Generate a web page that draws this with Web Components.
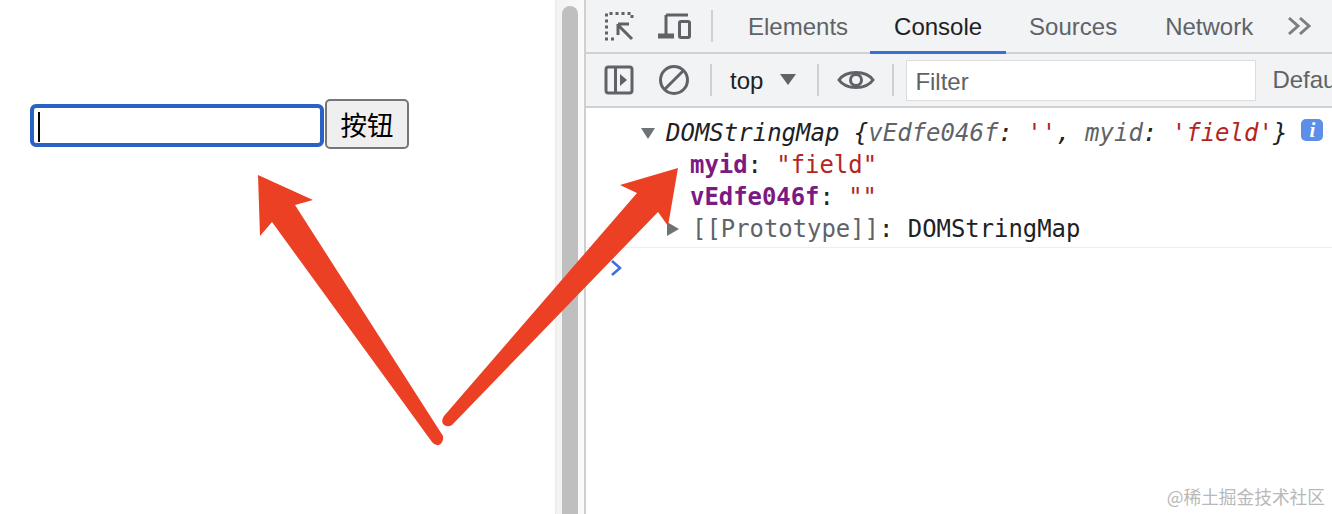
<!DOCTYPE html>
<html lang="zh">
<head>
<meta charset="utf-8">
<title>DOMStringMap</title>
<style>
    html, body{ margin: 0; height: 100%; background: #fff; overflow: hidden; }
    body{ font-family: "Liberation Sans", "Noto Sans CJK SC", sans-serif; }
</style>
</head>
<body>
<screen-shot>
    <demo-page></demo-page>
    <page-scrollbar></page-scrollbar>
    <dev-tools></dev-tools>
</screen-shot>

<script>
// outer frame, arrows and watermark lie over both panes
const shotTemplate = document.createElement('template');
shotTemplate.innerHTML = `
<style>
    :host{ display: flex; position: relative; width: 1332px; height: 514px; overflow: hidden; }
    svg{ position: absolute; left: 0; top: 0; pointer-events: none; }
    .mark{
        position: absolute;
        right: 7px;
        bottom: 6px;
        font: 17.7px/24px "Noto Sans CJK SC", sans-serif;
        color: #b8b8b8;
    }
</style>
<slot></slot>
<svg width="1332" height="514" viewBox="0 0 1332 514">
    <path fill="#ec4024" d="M258 175 L313 200 L295 205 L443 436 Q444 442 439 445 Q435 446 432 442 L272 222 L260 236 Z"/>
    <path fill="#ec4024" d="M678 168 L668 226 L658 212 L452 425 Q447 428 443 424 Q441 420 444 416 L637 193 L620 185 Z"/>
</svg>
<div class="mark">@稀土掘金技术社区</div>
`;
class ScreenShot extends HTMLElement{
    constructor(){
        super();
        this.attachShadow({mode: 'open'});
        this.shadowRoot.appendChild(shotTemplate.content.cloneNode(true));
    }
}
customElements.define('screen-shot', ScreenShot);

const demoTemplate = document.createElement('template');
demoTemplate.innerHTML = `
<style>
    :host{
        display: flex;
        flex: none;
        width: 524px;
        height: 100%;
        box-sizing: border-box;
        padding: 99px 0 0 30px;
        align-items: flex-start;
        gap: 1px;
        background: #fff;
    }
    .field{
        width: 294px;
        height: 43px;
        margin-top: 5px;
        box-sizing: border-box;
        border: 4px solid #2a62c4;
        border-radius: 6px;
        padding: 4px 0 0 4px;
        background: #fff;
    }
    .caret{ width: 2px; height: 30px; background: #000; }
    button{
        width: 84px;
        height: 50px;
        box-sizing: border-box;
        padding: 0;
        border: 2px solid #767676;
        border-radius: 5px;
        background: #efefef;
        color: #000;
        font: 26.5px/1 "Noto Sans CJK SC", sans-serif;
    }
</style>
<div class="field"><div class="caret"></div></div>
<button>按钮</button>
`;
class DemoPage extends HTMLElement{
    constructor(){
        super();
        this.attachShadow({mode: 'open'});
        this.shadowRoot.appendChild(demoTemplate.content.cloneNode(true));
    }
}
customElements.define('demo-page', DemoPage);

const barTemplate = document.createElement('template');
barTemplate.innerHTML = `
<style>
    :host{
        display: block;
        flex: none;
        width: 62px;
        height: 100%;
        box-sizing: border-box;
        padding: 6px 8px 0 38px;
        background: linear-gradient(90deg, #fff 31px, #e9e9e9 31px, #f3f3f3 33px, #f3f3f3 38px, #f9f9f9 54px, #fafafa 60px, #cfcfcf 60px);
    }
    .thumb{ height: 100%; border-radius: 8px 8px 0 0; background: #bfbfbf; }
</style>
<div class="thumb"></div>
`;
class PageScrollbar extends HTMLElement{
    constructor(){
        super();
        this.attachShadow({mode: 'open'});
        this.shadowRoot.appendChild(barTemplate.content.cloneNode(true));
    }
}
customElements.define('page-scrollbar', PageScrollbar);

const toolsTemplate = document.createElement('template');
toolsTemplate.innerHTML = `
<style>
    :host{
        display: flex;
        flex-direction: column;
        flex: 1;
        min-width: 0;
        height: 100%;
        font-family: "Liberation Sans", sans-serif;
        font-size: 24px;
        color: #5f6368;
    }
    .bar{
        display: flex;
        align-items: center;
        flex: none;
        height: 54px;
        box-sizing: border-box;
        border-bottom: 2px solid #d0d1d3;
        background: #f1f3f4;
        white-space: nowrap;
    }
    .tabs{ padding-left: 18px; }
    .tools{ padding-left: 18px; overflow: hidden; }
    svg{ display: block; flex: none; fill: none; stroke: #5f6368; stroke-width: 3; }
    .sep{ flex: none; width: 2px; height: 32px; background: #cfd0d2; }
    .context{ color: #202124; margin: 2px 0 0 18px; }
    .filter{
        flex: none;
        width: 350px;
        height: 41px;
        margin: 0 16px 0 12px;
        padding-left: 8px;
        box-sizing: border-box;
        border: 1px solid #dcdddf;
        background: #fff;
        line-height: 41px;
    }
</style>
<div class="bar tabs">
    <svg width="30" height="30" viewBox="0 0 30 30">
        <path stroke-dasharray="3 3" d="M10 28 H2.5 V2.5 H28 V10"/>
        <path d="M14 14 L28 28 M14 13 H25 M14 13 V24"/>
    </svg>
    <svg width="34" height="26" viewBox="0 0 34 26" style="margin-left:24px">
        <path d="M8 2 H30 M8 2 V23"/>
        <path d="M0 23 H16" stroke-width="5"/>
        <rect x="21.5" y="8.5" width="10" height="16" rx="1.5"/>
    </svg>
    <div class="sep" style="margin-left:19px"></div>
    <dev-tab style="margin-left:11px">Elements</dev-tab>
    <dev-tab active style="margin-left:-2px">Console</dev-tab>
    <dev-tab style="margin-left:-1px">Sources</dev-tab>
    <dev-tab>Network</dev-tab>
    <svg width="26" height="20" viewBox="0 0 26 20" style="margin-left:10px;stroke:#7b7e83">
        <path d="M2 2 L11 10 L2 18 M13 2 L22 10 L13 18"/>
    </svg>
</div>
<div class="bar tools">
    <svg width="30" height="30" viewBox="0 0 30 30">
        <rect x="2" y="2" width="26" height="26" rx="2.5"/>
        <path d="M11.5 2 V28"/>
        <path d="M16 9 L23 15 L16 21 Z" fill="#5f6368" stroke="none"/>
    </svg>
    <svg width="32" height="32" viewBox="0 0 32 32" style="margin-left:24px">
        <circle cx="16" cy="16" r="13.5"/>
        <path d="M6.5 25.5 L25.5 6.5"/>
    </svg>
    <div class="sep" style="margin-left:20px"></div>
    <div class="context">top</div>
    <svg width="16" height="12" viewBox="0 0 16 12" style="margin-left:17px;margin-top:-1px">
        <path d="M0 0 H16 L8 11 Z" fill="#5f6368" stroke="none"/>
    </svg>
    <div class="sep" style="margin-left:21px"></div>
    <svg width="38" height="26" viewBox="0 0 38 26" style="margin-left:18px">
        <path d="M2 13 C9 3 29 3 36 13 C29 23 9 23 2 13 Z"/>
        <circle cx="19" cy="13" r="5.5"/>
    </svg>
    <div class="sep" style="margin-left:17px"></div>
    <div class="filter">Filter</div>
    <div>Default levels</div>
</div>
<dev-console></dev-console>
`;
class DevTools extends HTMLElement{
    constructor(){
        super();
        this.attachShadow({mode: 'open'});
        this.shadowRoot.appendChild(toolsTemplate.content.cloneNode(true));
    }
}
customElements.define('dev-tools', DevTools);

const tabTemplate = document.createElement('template');
tabTemplate.innerHTML = `
<style>
    :host{
        display: block;
        flex: none;
        align-self: flex-start;
        height: 52px;
        box-sizing: border-box;
        padding: 0 24px;
        line-height: 54px;
        color: #5f6368;
    }
    :host([active]){ color: #202124; border-bottom: 3px solid #3b6fd6; height: 54px; }
</style>
<slot></slot>
`;
class DevTab extends HTMLElement{
    constructor(){
        super();
        this.attachShadow({mode: 'open'});
        this.shadowRoot.appendChild(tabTemplate.content.cloneNode(true));
    }
}
customElements.define('dev-tab', DevTab);

const consoleTemplate = document.createElement('template');
consoleTemplate.innerHTML = `
<style>
    :host{
        display: block;
        flex: 1;
        background: #fff;
        padding-top: 9px;
        font: 23.9px/32px "DejaVu Sans Mono", monospace;
        color: #202124;
        white-space: nowrap;
        overflow: hidden;
    }
    .row{ display: flex; align-items: center; height: 32px; }
    .head{ padding-left: 55px; font-style: italic; font-size: 24px; }
    .prop{ padding-left: 104px; }
    .proto{ padding-left: 81px; }
    .key{ color: #7b1a82; font-weight: bold; }
    .str{ color: #b3261e; }
    .dim{ color: #5f6368; }
    svg{ flex: none; }
    .info{
        flex: none;
        width: 22px;
        height: 22px;
        margin: -6px 0 0 14px;
        border-radius: 5px;
        background: #5e8fe8;
        color: #fff;
        font: italic bold 21px/22px "Liberation Serif", serif;
        text-align: center;
    }
    .line{ height: 1px; margin-top: 2px; background: #eeeeee; }
    .prompt{ display: block; margin: 12px 0 0 24px; fill: none; stroke: #3b6fe0; stroke-width: 2.5; }
</style>
<div class="row head">
    <svg width="14" height="11" viewBox="0 0 14 11" style="margin-right:11px"><path d="M0 0 H14 L7 11 Z" fill="#6e7175"/></svg>
    <span>DOMStringMap {<span class="dim">vEdfe046f</span>: <span class="str">''</span>, <span class="dim">myid</span>: <span class="str">'field'</span>}</span>
    <span class="info">i</span>
</div>
<div class="row prop"><span><span class="key">myid</span>: <span class="str">"field"</span></span></div>
<div class="row prop"><span><span class="key">vEdfe046f</span>: <span class="str">""</span></span></div>
<div class="row proto">
    <svg width="12" height="14" viewBox="0 0 12 14" style="margin-right:13px"><path d="M0 0 L12 7 L0 14 Z" fill="#6e7175"/></svg>
    <span><span class="dim">[[Prototype]]</span>: DOMStringMap</span>
</div>
<div class="line"></div>
<svg class="prompt" width="12" height="16" viewBox="0 0 12 16"><path d="M2 1 L10 8 L2 15"/></svg>
`;
class DevConsole extends HTMLElement{
    constructor(){
        super();
        this.attachShadow({mode: 'open'});
        this.shadowRoot.appendChild(consoleTemplate.content.cloneNode(true));
    }
}
customElements.define('dev-console', DevConsole);
</script>
</body>
</html>
